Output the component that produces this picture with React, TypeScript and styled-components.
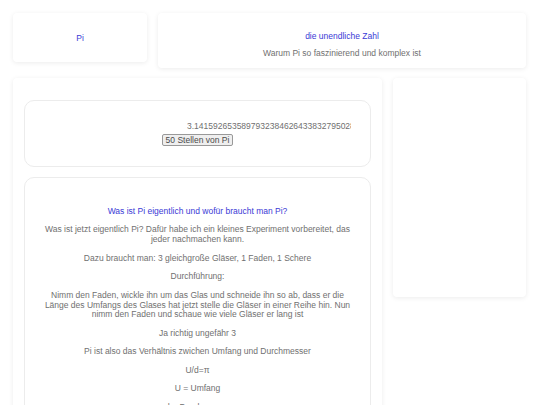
import { createGlobalStyle, styled } from 'styled-components'

const PI_DIGITS = '3.14159265358979323846264338327950288419716939937510'

const paragraphs = [
  'Was ist jetzt eigentlich Pi? Dafür habe ich ein kleines Experiment vorbereitet, das jeder nachmachen kann.',
  'Dazu braucht man: 3 gleichgroße Gläser, 1 Faden, 1 Schere',
  'Durchführung:',
  'Nimm den Faden, wickle ihn um das Glas und schneide ihn so ab, dass er die Länge des Umfangs des Glases hat jetzt stelle die Gläser in einer Reihe hin. Nun nimm den Faden und schaue wie viele Gläser er lang ist',
  'Ja richtig ungefähr 3',
  'Pi ist also das Verhältnis zwichen Umfang und Durchmesser',
  'U/d=π',
  'U = Umfang',
  'd = Durchmesser',
  'π = Pi'
]

const App = () => {
  return (
    <>
      <GlobalStyle />
      <Page>
        <TopRow>
          <Card $height={49}>
            <Logo>Pi</Logo>
          </Card>
          <TitleCard>
            <Title>die unendliche Zahl</Title>
            <Subtitle>Warum Pi so faszinierend und komplex ist</Subtitle>
          </TitleCard>
        </TopRow>
        <MainRow>
          <MainCard>
            <DigitsBox>
              <Digits>{PI_DIGITS}</Digits>
              <Button>50 Stellen von Pi</Button>
            </DigitsBox>
            <Article>
              <Heading>Was ist Pi eigentlich und wofür braucht man Pi?</Heading>
              {paragraphs.map((text) => (
                <Text key={text}>{text}</Text>
              ))}
            </Article>
          </MainCard>
          <Card $height={219} />
        </MainRow>
      </Page>
    </>
  )
}
export default App

const GlobalStyle = createGlobalStyle`
  html, body {
    margin: 0;
    padding: 0;
    background: #ffffff;
    overflow: hidden;
  }

  body {
    font-family: "Liberation Sans", Arial, sans-serif;
    font-size: 8.5px;
    color: #707070;
  }
`

const Page = styled.div`
  display: flex;
  flex-direction: column;
  gap: 10px;
  padding: 13px 14px 13px 13px;
`

const TopRow = styled.div`
  display: grid;
  grid-template-columns: 134px 1fr;
  gap: 11px;
  align-items: start;
`

const MainRow = styled.div`
  display: grid;
  grid-template-columns: 1fr 133px;
  gap: 11px;
  align-items: start;
`

const Card = styled.div<{ $height?: number }>`
  display: flex;
  align-items: center;
  justify-content: center;
  height: ${(p) => (p.$height !== undefined ? `${p.$height}px` : 'auto')};
  background: #ffffff;
  border-radius: 4px;
  box-shadow: 0 1px 5px rgba(0, 0, 0, 0.08);
`

const Logo = styled.span`
  color: #3a3ad6;
  line-height: 10px;
`

const TitleCard = styled(Card)`
  flex-direction: column;
  justify-content: flex-start;
  gap: 7px;
  height: 55px;
  box-sizing: border-box;
  padding-top: 18px;
`

const Title = styled.div`
  color: #3a3ad6;
  line-height: 10px;
`

const Subtitle = styled.div`
  line-height: 10px;
`

const MainCard = styled.div`
  display: flex;
  flex-direction: column;
  gap: 10px;
  padding: 22px 11px 40px;
  background: #ffffff;
  border-radius: 4px;
  box-shadow: 0 1px 5px rgba(0, 0, 0, 0.08);
`

const Inner = styled.div`
  border: 1px solid #ececec;
  border-radius: 10px;
  background: #ffffff;
`

const DigitsBox = styled(Inner)`
  display: flex;
  flex-direction: column;
  align-items: center;
  justify-content: center;
  gap: 3px;
  height: 67px;
  box-sizing: border-box;
  padding: 0 19px;
`

const Digits = styled.div`
  align-self: flex-end;
  width: 164px;
  overflow: hidden;
  white-space: nowrap;
  line-height: 10px;
`

const Button = styled.button`
  height: 12px;
  padding: 0 3px;
  font-family: "Liberation Sans", Arial, sans-serif;
  font-size: 8.5px;
  line-height: 10px;
  color: #4a4a4a;
  background: #efefef;
  border: 1px solid #999999;
  border-radius: 2px;
`

const Article = styled(Inner)`
  display: flex;
  flex-direction: column;
  align-items: center;
  gap: 8.7px;
  padding: 29px 15px 20px;
  text-align: center;
`

const Heading = styled.div`
  color: #3a3ad6;
  line-height: 9.8px;
`

const Text = styled.p`
  margin: 0;
  line-height: 9.8px;
`
